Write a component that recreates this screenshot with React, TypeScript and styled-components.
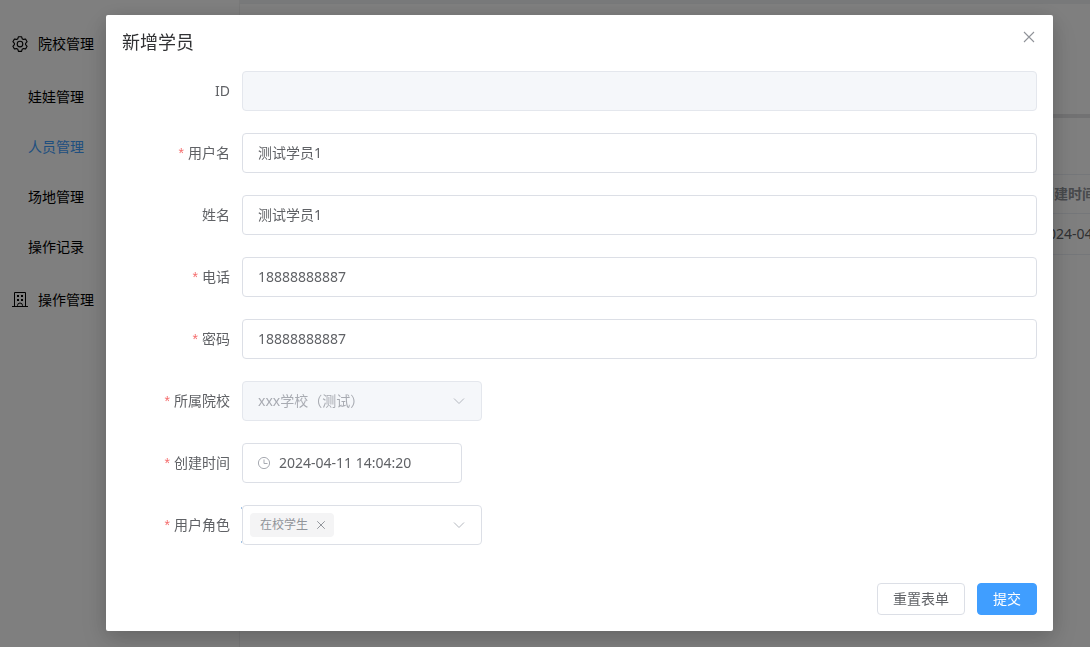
import React from 'react';
import styled, { createGlobalStyle, css } from 'styled-components';

const GlobalStyle = createGlobalStyle`
  *, *::before, *::after { box-sizing: border-box; }
  body {
    margin: 0;
    overflow: hidden;
    background: #fff;
    color: #303133;
    font-family: 'Noto Sans', 'Noto Sans CJK SC', sans-serif;
    font-size: 14px;
    line-height: 20px;
  }
  button, input, select { font: inherit; }
`;

const Page = styled.div`
  display: flex;
  min-height: 100vh;
`;

const Sidebar = styled.nav`
  flex: 0 0 240px;
  padding: 16px 0;
  border-right: 1px solid #f2f2f3;
`;

const MenuGroup = styled.div`
  display: flex;
  align-items: center;
  gap: 9px;
  height: 56px;
  padding-left: 11px;
  color: #000;
`;

const MenuLink = styled.a<{ $active?: boolean }>`
  display: flex;
  align-items: center;
  height: 50px;
  padding-left: 28px;
  text-decoration: none;
  color: ${({ $active }) => ($active ? '#409eff' : '#000')};
`;

const Main = styled.main`
  flex: 1;
  min-width: 0;
  border-top: 4px solid #f0f2f5;
`;

const SearchPanel = styled.section`
  height: 114px;
  border-bottom: 4px solid #e4e4e6;
`;

const TablePanel = styled.section`
  padding-top: 56px;
`;

const Table = styled.table`
  width: 100%;
  table-layout: fixed;
  border-collapse: collapse;
  border-top: 1px solid #ebeef5;
`;

const Cell = styled.td<{ $head?: boolean }>`
  height: ${({ $head }) => ($head ? 39 : 41)}px;
  padding: 0 0 0 12px;
  border-bottom: 1px solid #ebeef5;
  overflow: hidden;
  white-space: nowrap;
  text-align: left;
  font-weight: ${({ $head }) => ($head ? 700 : 400)};
  color: ${({ $head }) => ($head ? '#909399' : '#606266')};
`;

const Overlay = styled.div`
  position: fixed;
  inset: 0;
  overflow: auto;
  padding: 15px 37px 16px 106px;
  background: rgba(0, 0, 0, 0.5);
`;

const Dialog = styled.section`
  padding: 16px;
  border-radius: 2px;
  background: #fff;
  box-shadow: 0 12px 32px 4px rgba(0, 0, 0, 0.08), 0 4px 20px rgba(0, 0, 0, 0.16);
`;

const DialogHeader = styled.header`
  display: flex;
  align-items: flex-start;
  justify-content: space-between;
  height: 40px;
`;

const Title = styled.h2`
  margin: 0;
  font-size: 18px;
  line-height: 22px;
  font-weight: 400;
  color: #303133;
`;

const IconButton = styled.button`
  display: flex;
  padding: 0;
  border: 0;
  background: none;
  color: #909399;
`;

const CloseButton = styled(IconButton)`
  margin-top: -2px;
`;

const Form = styled.form`
  display: flex;
  flex-direction: column;
  gap: 22px;
`;

const Field = styled.div`
  display: flex;
  align-items: center;
`;

const Label = styled.label<{ $required?: boolean }>`
  flex: 0 0 120px;
  padding-right: 12px;
  text-align: right;
  color: #606266;
  ${({ $required }) =>
    $required &&
    css`
      &::before {
        content: '*';
        margin-right: 4px;
        font-family: 'Liberation Sans', sans-serif;
        color: #f56c6c;
      }
    `}
`;

const control = css`
  height: 40px;
  border: 1px solid #dcdfe6;
  border-radius: 4px;
  background: #fff;
  color: #606266;
  outline: 0;
`;

const Input = styled.input`
  ${control}
  flex: 1;
  min-width: 0;
  padding: 0 15px 2px;
  &:disabled {
    border-color: #e4e7ed;
    background: #f5f7fa;
  }
`;

const SelectBox = styled.div<{ $disabled?: boolean; $focusMarks?: boolean }>`
  ${control}
  position: relative;
  display: flex;
  align-items: center;
  width: 240px;
  padding-right: 15px;
  color: #b4b8bf;
  ${({ $disabled }) => $disabled && 'border-color: #e4e7ed; background: #f5f7fa;'}
  ${({ $focusMarks }) =>
    $focusMarks &&
    css`
      &::before {
        content: '';
        position: absolute;
        top: 1px;
        bottom: 1px;
        left: -2px;
        width: 1px;
        border: solid #a3c4e4;
        border-width: 2px 0;
      }
    `}
`;

const Select = styled.select`
  flex: 1;
  min-width: 0;
  height: 38px;
  padding: 0 0 0 15px;
  border: 0;
  outline: 0;
  appearance: none;
  background: none;
  color: #606266;
  &:disabled { color: #a8abb2; opacity: 1; }
`;

const DateBox = styled.div`
  ${control}
  display: flex;
  align-items: center;
  gap: 8px;
  width: 220px;
  padding: 0 14px;
  color: #a8abb2;
`;

const BareInput = styled.input`
  flex: 1;
  min-width: 0;
  padding: 0;
  border: 0;
  outline: 0;
  background: none;
  color: #606266;
`;

const Tag = styled.span`
  display: flex;
  align-items: center;
  gap: 7px;
  height: 24px;
  margin-left: 7px;
  padding: 0 7px 0 10px;
  border-radius: 4px;
  background: #f4f4f5;
  color: #909399;
  font-size: 12px;
  white-space: nowrap;
`;

const Actions = styled.div`
  display: flex;
  justify-content: flex-end;
  gap: 12px;
  padding-top: 16px;
`;

const Button = styled.button<{ $primary?: boolean }>`
  height: 32px;
  padding: 0 15px;
  border: 1px solid ${({ $primary }) => ($primary ? '#409eff' : '#dcdfe6')};
  border-radius: 4px;
  background: ${({ $primary }) => ($primary ? '#409eff' : '#fff')};
  color: ${({ $primary }) => ($primary ? '#fff' : '#606266')};
`;

const Svg = styled.svg`
  flex: none;
  display: block;
  fill: none;
  stroke: currentColor;
`;

const GearIcon = () => (
  <Svg width="18" height="18" viewBox="0 0 1024 1024">
    <path
      fill="currentColor"
      stroke="none"
      d="M600.704 64a32 32 0 0 1 30.464 22.208l35.2 109.376c14.784 7.232 28.928 15.36 42.432 24.512l112.384-24.192a32 32 0 0 1 34.432 15.36L944.32 364.8a32 32 0 0 1-4.032 37.504l-77.12 85.12a357.12 357.12 0 0 1 0 49.024l77.12 85.248a32 32 0 0 1 4.032 37.504l-88.704 153.6a32 32 0 0 1-34.432 15.296L708.8 803.904c-13.44 9.088-27.648 17.28-42.368 24.512l-35.264 109.376A32 32 0 0 1 600.704 960H423.296a32 32 0 0 1-30.464-22.208L357.696 828.48a351.616 351.616 0 0 1-42.56-24.64l-112.32 24.256a32 32 0 0 1-34.432-15.36L79.68 659.2a32 32 0 0 1 4.032-37.504l77.12-85.248a357.12 357.12 0 0 1 0-48.896l-77.12-85.248A32 32 0 0 1 79.68 364.8l88.704-153.6a32 32 0 0 1 34.432-15.296l112.32 24.256c13.568-9.152 27.776-17.408 42.56-24.64l35.2-109.312A32 32 0 0 1 423.232 64H600.64zm-23.424 64H446.72l-36.352 113.088-24.512 11.968a294.113 294.113 0 0 0-34.816 20.096l-22.656 15.36-116.224-25.088-65.28 113.152 79.68 88.192-1.92 27.136a293.12 293.12 0 0 0 0 40.192l1.92 27.136-79.808 88.192 65.344 113.152 116.224-25.024 22.656 15.296a294.113 294.113 0 0 0 34.816 20.096l24.512 11.968L446.72 896h130.688l36.48-113.152 24.448-11.904a288.282 288.282 0 0 0 34.752-20.096l22.592-15.296 116.288 25.024 65.28-113.152-79.744-88.192 1.92-27.136a293.12 293.12 0 0 0 0-40.256l-1.92-27.136 79.808-88.128-65.344-113.152-116.288 24.96-22.592-15.232a287.616 287.616 0 0 0-34.752-20.096l-24.448-11.904L577.344 128zM512 320a192 192 0 1 1 0 384 192 192 0 0 1 0-384zm0 64a128 128 0 1 0 0 256 128 128 0 0 0 0-256z"
    />
  </Svg>
);

const BuildingIcon = () => (
  <Svg width="18" height="18" viewBox="0 0 18 18">
    <path d="M3.500 15.500v-14h11v14M1 15.500h16M6.500 15.500v-1a2.500 2.500 0 0 1 5 0v1" />
    <path strokeWidth="2" d="M6 5h2M10 5h2M6 9h2M10 9h2" />
  </Svg>
);

const CloseIcon = ({ size }: { size: number }) => (
  <Svg width={size} height={size} viewBox="0 0 16 16">
    <path d="M3 3l10 10M13 3L3 13" strokeWidth={size < 16 ? 1.3 : 1.1} />
  </Svg>
);

const ChevronIcon = () => (
  <Svg width="14" height="14" viewBox="0 0 14 14">
    <path d="M2 4.500l5 5 5-5" />
  </Svg>
);

const ClockIcon = () => (
  <Svg width="14" height="14" viewBox="0 0 14 14">
    <circle cx="7" cy="7" r="5.600" />
    <path d="M7 3.500v4h3.500" />
  </Svg>
);

interface TextFieldProps {
  id: string;
  label: string;
  value: string;
  required?: boolean;
  disabled?: boolean;
}

const TextField = ({ id, label, value, required, disabled }: TextFieldProps) => (
  <Field>
    <Label htmlFor={id} $required={required}>{label}</Label>
    <Input id={id} defaultValue={value} disabled={disabled} />
  </Field>
);

export default function App() {
  return (
    <>
      <GlobalStyle />
      <Page>
        <Sidebar>
          <MenuGroup><GearIcon />院校管理</MenuGroup>
          <MenuLink href="#dolls">娃娃管理</MenuLink>
          <MenuLink href="#people" $active>人员管理</MenuLink>
          <MenuLink href="#venues">场地管理</MenuLink>
          <MenuLink href="#logs">操作记录</MenuLink>
          <MenuGroup><BuildingIcon />操作管理</MenuGroup>
        </Sidebar>
        <Main>
          <SearchPanel />
          <TablePanel>
            <Table>
              <colgroup>
                <col />
                <col width="62" />
              </colgroup>
              <thead>
                <tr><Cell as="th" $head /><Cell as="th" $head>创建时间</Cell></tr>
              </thead>
              <tbody>
                <tr><Cell /><Cell>2024-04-11</Cell></tr>
              </tbody>
            </Table>
          </TablePanel>
        </Main>
      </Page>
      <Overlay>
        <Dialog role="dialog" aria-labelledby="dialog-title">
          <DialogHeader>
            <Title id="dialog-title">新增学员</Title>
            <CloseButton type="button" aria-label="关闭"><CloseIcon size={16} /></CloseButton>
          </DialogHeader>
          <Form>
            <TextField id="uid" label="ID" value="" disabled />
            <TextField id="username" label="用户名" value="测试学员1" required />
            <TextField id="realname" label="姓名" value="测试学员1" />
            <TextField id="phone" label="电话" value="18888888887" required />
            <TextField id="password" label="密码" value="18888888887" required />
            <Field>
              <Label htmlFor="school" $required>所属院校</Label>
              <SelectBox $disabled>
                <Select id="school" disabled><option>xxx学校（测试）</option></Select>
                <ChevronIcon />
              </SelectBox>
            </Field>
            <Field>
              <Label htmlFor="created" $required>创建时间</Label>
              <DateBox>
                <ClockIcon />
                <BareInput id="created" defaultValue="2024-04-11 14:04:20" />
              </DateBox>
            </Field>
            <Field>
              <Label htmlFor="role" $required>用户角色</Label>
              <SelectBox $focusMarks>
                <Tag>
                  在校学生
                  <IconButton type="button" aria-label="移除在校学生"><CloseIcon size={12} /></IconButton>
                </Tag>
                <Select id="role"><option aria-label="无" /></Select>
                <ChevronIcon />
              </SelectBox>
            </Field>
            <Actions>
              <Button type="reset">重置表单</Button>
              <Button type="submit" $primary>提交</Button>
            </Actions>
          </Form>
        </Dialog>
      </Overlay>
    </>
  );
}
